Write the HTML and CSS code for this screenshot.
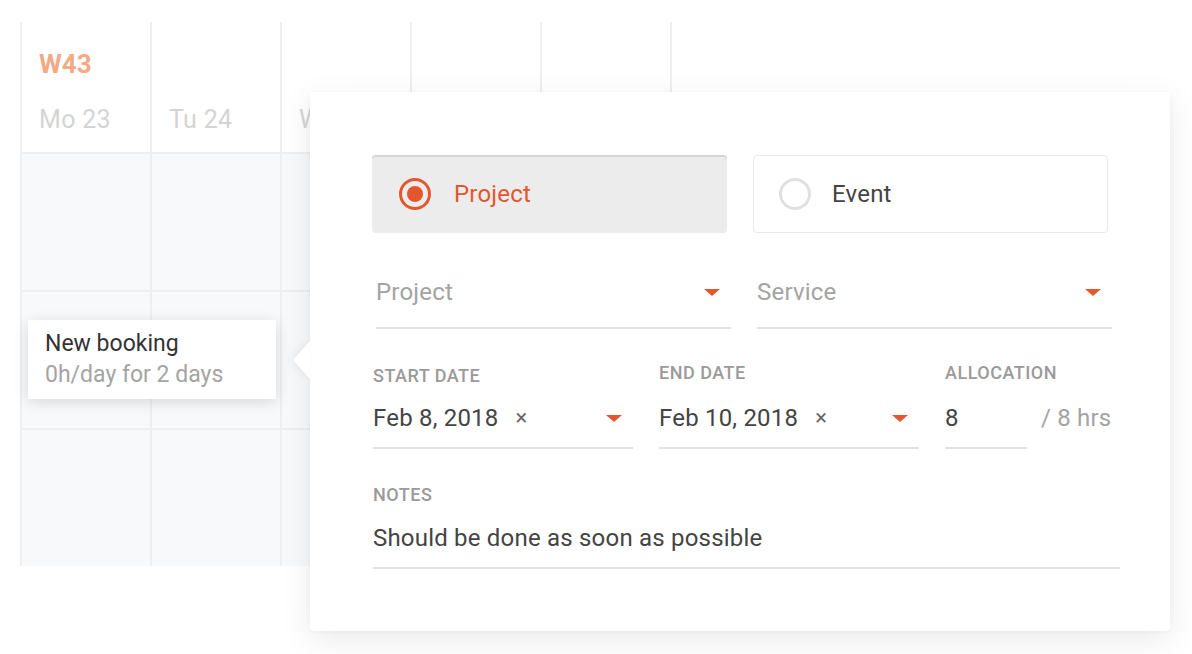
FILE: index.html
```html
<!DOCTYPE html>
<html lang="en">
<head>
<meta charset="utf-8">
<title>New booking</title>
<link rel="stylesheet" href="styles.css">
</head>
<body>
<div class="stage">
  <div class="calendar">
    <div class="cal-head">
      <div class="week">W43</div>
      <div class="day">Mo 23</div>
    </div>
    <div class="cal-head"><div class="day">Tu 24</div></div>
    <div class="cal-head"><div class="day">We 25</div></div>
    <div class="cal-head"><div class="day">Th 26</div></div>
    <div class="cal-head"><div class="day">Fr 27</div></div>
    <div class="cell"></div><div class="cell"></div><div class="cell"></div><div class="cell"></div><div class="cell"></div>
    <div class="cell"></div><div class="cell"></div><div class="cell"></div><div class="cell"></div><div class="cell"></div>
    <div class="cell"></div><div class="cell"></div><div class="cell"></div><div class="cell"></div><div class="cell"></div>
  </div>

  <div class="tip">
    <div class="tip-title">New booking</div>
    <div class="tip-sub">0h/day for 2 days</div>
  </div>

  <div class="popup">
    <div class="types">
      <div class="type type--active"><span class="radio radio--on"></span><span>Project</span></div>
      <div class="type type--idle"><span class="radio radio--off"></span><span>Event</span></div>
    </div>

    <div class="selects">
      <div class="select"><span>Project</span><span class="caret"></span></div>
      <div class="select"><span>Service</span><span class="caret"></span></div>
    </div>

    <div class="dates">
      <div class="field field--start">
        <div class="label label--low">Start date</div>
        <div class="input"><span>Feb 8, 2018</span><span class="clear">×</span><span class="caret caret--push"></span></div>
      </div>
      <div class="field field--end">
        <div class="label">End date</div>
        <div class="input"><span>Feb 10, 2018</span><span class="clear">×</span><span class="caret caret--push"></span></div>
      </div>
      <div class="field field--alloc">
        <div class="label">Allocation</div>
        <div class="alloc-row">
          <div class="input input--alloc"><span>8</span></div>
          <span class="suffix">/ 8 hrs</span>
        </div>
      </div>
    </div>

    <div class="notes">
      <div class="label label--notes">Notes</div>
      <div class="input input--notes">Should be done as soon as possible</div>
    </div>
  </div>
</div>
</body>
</html>
```

FILE: styles.css
```css
html, body {
  margin: 0;
  padding: 0;
  background: #ffffff;
}

body {
  font-family: "Roboto", "Liberation Sans", sans-serif;
  color: #444444;
}

.stage {
  position: relative;
  width: 1192px;
  height: 654px;
  overflow: hidden;
  box-sizing: border-box;
  padding: 22px 0 0 20px;
}

/* calendar grid */
.calendar {
  display: grid;
  grid-template-columns: repeat(5, 128px);
  grid-template-rows: 130px 136px 136px 136px;
  gap: 2px;
  padding: 0 2px;
  width: max-content;
  background: #eeeff1;
}

.cell {
  background: #f8f9fb;
}

.cal-head {
  background: #ffffff;
  display: flex;
  flex-direction: column;
  justify-content: flex-end;
  padding: 0 0 17px 17px;
}

.week {
  font-size: 26px;
  line-height: 30px;
  font-weight: 700;
  color: #f4a985;
  margin-bottom: 26px;
}

.day {
  font-size: 25px;
  line-height: 30px;
  letter-spacing: 0.3px;
  color: #d4d4d4;
}

/* tooltip */
.tip {
  position: absolute;
  left: 28px;
  top: 320px;
  width: 248px;
  height: 79px;
  box-sizing: border-box;
  padding: 8px 17px;
  background: #ffffff;
  box-shadow: 0 3px 14px rgba(0, 0, 0, 0.14);
  font-size: 23px;
  line-height: 31px;
}

.tip-title {
  color: #333333;
}

.tip-sub {
  color: #a4a4a4;
}

/* popup */
.popup {
  position: absolute;
  left: 310px;
  top: 92px;
  width: 860px;
  box-sizing: border-box;
  padding: 63px 62px 62px;
  background: #ffffff;
  border-radius: 4px;
  box-shadow: 0 8px 32px rgba(0, 0, 0, 0.09), 0 1px 4px rgba(0, 0, 0, 0.04);
}

.popup::before {
  content: "";
  position: absolute;
  left: -17px;
  top: 249px;
  width: 0;
  height: 0;
  border-style: solid;
  border-width: 19px 17px 19px 0;
  border-color: transparent #ffffff transparent transparent;
  filter: drop-shadow(-3px 0 3px rgba(0, 0, 0, 0.05));
}

.types {
  display: flex;
  gap: 26px;
}

.type {
  flex: 0 0 355px;
  height: 78px;
  box-sizing: border-box;
  border-radius: 4px;
  display: flex;
  align-items: center;
  font-size: 24px;
  line-height: 30px;
  letter-spacing: 0.2px;
}

.type--active {
  background: #ececec;
  box-shadow: inset 0 2px 0 #d6d6d6;
  color: #e4572e;
  padding-left: 27px;
  gap: 23px;
}

.type--idle {
  border: 1px solid #e9e9e9;
  color: #444444;
  padding-left: 25px;
  gap: 21px;
}

.radio {
  width: 32px;
  height: 32px;
  box-sizing: border-box;
  border-radius: 50%;
  border: 3px solid #e0e0e0;
  display: grid;
  place-items: center;
  flex: none;
}

.radio--on {
  border-color: #e4572e;
}

.radio--on::after {
  content: "";
  width: 16px;
  height: 16px;
  border-radius: 50%;
  background: #e4572e;
}

.radio--off {
  border-color: #e0e0e0;
}

/* selects */
.selects {
  display: flex;
  gap: 26px;
  margin: 44px 0 0 4px;
}

.select {
  flex: 0 0 355px;
  box-sizing: border-box;
  display: flex;
  align-items: center;
  justify-content: space-between;
  padding: 0 11px 20px 0;
  border-bottom: 2px solid #e2e2e2;
  font-size: 24px;
  line-height: 30px;
  letter-spacing: 0.2px;
  color: #a3a3a3;
}

.caret {
  width: 0;
  height: 0;
  border-left: 8px solid transparent;
  border-right: 8px solid transparent;
  border-top: 7px solid #e4572e;
  flex: none;
}

.caret--push {
  margin-left: auto;
}

/* dates */
.dates {
  display: flex;
  margin-top: 34px;
}

.field {
  display: flex;
  flex-direction: column;
  flex-shrink: 0;
}

.field--start {
  width: 260px;
  margin-left: 1px;
}

.field--end {
  width: 260px;
  margin-left: 26px;
}

.field--alloc {
  margin-left: 26px;
}

.label {
  font-size: 18px;
  line-height: 20px;
  font-weight: 500;
  letter-spacing: 0.5px;
  text-transform: uppercase;
  color: #9a9a9a;
  margin-bottom: 20px;
}

.label--low {
  padding-top: 3px;
  margin-bottom: 17px;
}

.input {
  display: flex;
  align-items: center;
  font-size: 24px;
  line-height: 30px;
  letter-spacing: 0.2px;
  color: #444444;
  padding: 0 11px 14px 0;
  border-bottom: 2px solid #e2e2e2;
  white-space: nowrap;
}

.clear {
  margin-left: 17px;
  font-size: 22px;
  color: #666666;
}

.alloc-row {
  display: flex;
  align-items: flex-start;
}

.input--alloc {
  width: 82px;
  box-sizing: border-box;
}

.suffix {
  margin-left: 14px;
  font-size: 24px;
  line-height: 30px;
  letter-spacing: 0.2px;
  color: #a3a3a3;
  white-space: nowrap;
}

/* notes */
.notes {
  margin-top: 36px;
  margin-left: 1px;
}

.label--notes {
  margin-bottom: 18px;
}

.input--notes {
  margin-right: -12px;
}
```
